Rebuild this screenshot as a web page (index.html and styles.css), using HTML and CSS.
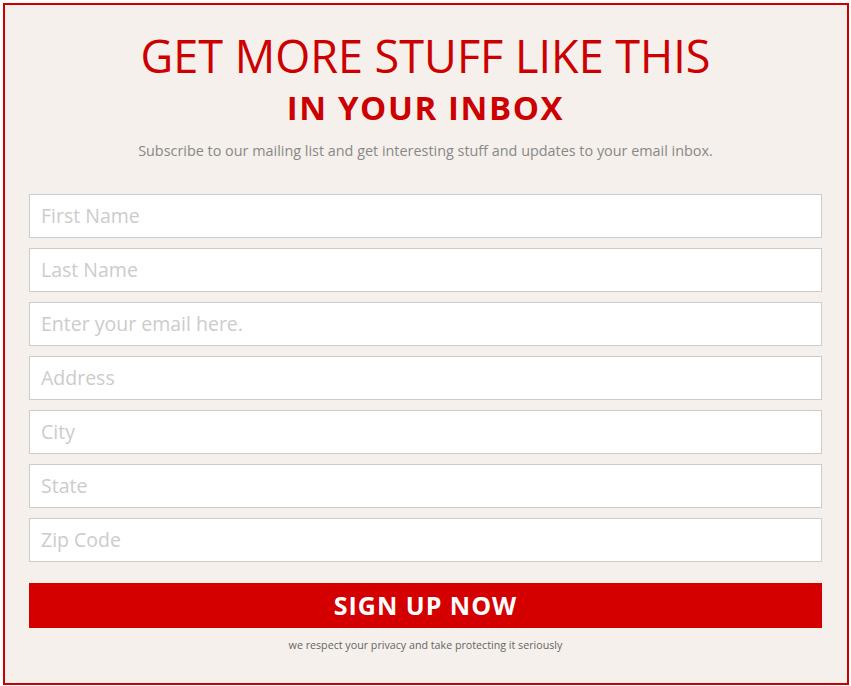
FILE: index.html
```html
<!DOCTYPE html>
<html>
<head>
<meta charset="utf-8">
<link rel="stylesheet" href="styles.css">
</head>
<body>
<div class="box">
  <h1 class="title">GET MORE STUFF LIKE THIS</h1>
  <h2 class="subtitle">IN YOUR INBOX</h2>
  <p class="lead">Subscribe to our mailing list and get interesting stuff and updates to your email inbox.</p>
  <form class="form">
    <input class="field" type="text" placeholder="First Name">
    <input class="field" type="text" placeholder="Last Name">
    <input class="field" type="text" placeholder="Enter your email here.">
    <input class="field" type="text" placeholder="Address">
    <input class="field" type="text" placeholder="City">
    <input class="field" type="text" placeholder="State">
    <input class="field" type="text" placeholder="Zip Code">
    <button class="submit" type="button">SIGN UP NOW</button>
  </form>
  <p class="privacy">we respect your privacy and take protecting it seriously</p>
</div>
</body>
</html>
```
FILE: styles.css
```css
html, body { margin: 0; padding: 0; background: #ffffff; }
body { font-family: "Open Sans", "Liberation Sans", sans-serif; }
.box {
  margin: 3px;
  border: 2px solid #c80000;
  background: #f5f0eb;
  padding: 0 25px 0 24px;
  box-sizing: border-box;
  width: 846px;
  height: 682px;
  display: flex;
  flex-direction: column;
}
.title {
  margin: 24.5px 0 0;
  font-size: 45px;
  font-weight: 400;
  line-height: 52px;
  color: #cc0000;
  text-align: center;
}
.subtitle {
  margin: 5px 0 0;
  font-size: 33px;
  font-weight: 700;
  line-height: 42px;
  letter-spacing: 1.6px;
  color: #cc0000;
  text-align: center;
}
.lead {
  margin: 12px 0 0;
  font-size: 14.4px;
  line-height: 20px;
  color: #888888;
  text-align: center;
}
.form {
  margin-top: 33px;
  display: flex;
  flex-direction: column;
  gap: 10px;
}
.field {
  height: 44px;
  box-sizing: border-box;
  border: 1px solid #cccccc;
  background: #ffffff;
  padding: 0 11px;
  font-family: "Open Sans", "Liberation Sans", sans-serif;
  font-size: 19.5px;
  color: #333;
  outline: none;
  margin: 0;
}
.field::placeholder { color: #cccccc; }
.submit {
  margin-top: 11px;
  height: 45px;
  border: none;
  background: #d40000;
  color: #ffffff;
  font-family: "Open Sans", "Liberation Sans", sans-serif;
  font-size: 25px;
  font-weight: 700;
  letter-spacing: 1px;
  padding: 0;
}
.privacy {
  margin: 9px 0 0;
  font-size: 10.7px;
  line-height: 16px;
  color: #666666;
  text-align: center;
}
```
